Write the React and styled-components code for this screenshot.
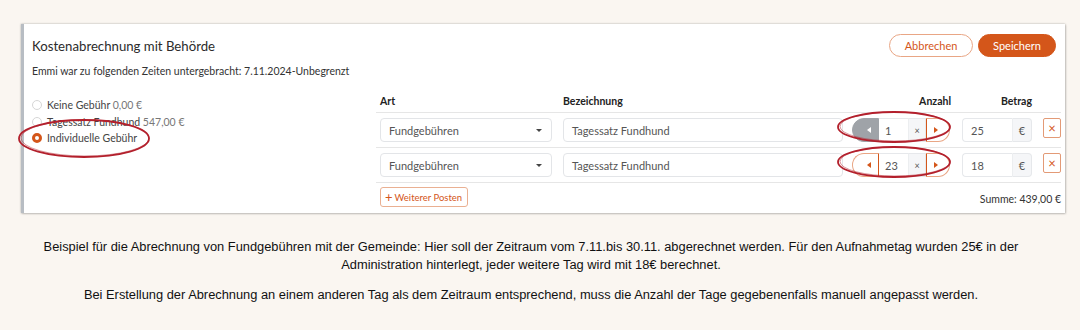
import React from 'react'
import styled, { createGlobalStyle, css } from 'styled-components'

const orange = '#d4561a'

const GlobalStyle = createGlobalStyle`
  html, body {
    margin: 0;
    padding: 0;
    background: #faf6f1;
  }
  body {
    font-family: Lato, "Open Sans", sans-serif;
  }
`

const Page = styled.div`
  width: 1080px;
  height: 330px;
  padding-top: 24px;
  box-sizing: border-box;
`

const Card = styled.div`
  position: relative;
  margin: 0 15px 0 21px;
  background: #fff;
  border-left: 3px solid #b8bdc3;
  box-shadow: 0 0 2px rgba(0, 0, 0, 0.3), 1px 1px 2px rgba(0, 0, 0, 0.15);
  padding: 10px 4px 5px 8px;
  height: 189px;
  box-sizing: border-box;
  color: #333;
`

const Header = styled.div`
  display: flex;
  align-items: center;
  justify-content: space-between;
  padding-right: 5px;
  height: 23px;
`

const Title = styled.h1`
  margin: 0;
  font-size: 13.2px;
  font-weight: 400;
  color: #2b2b2b;
`

const Actions = styled.div`
  display: flex;
  gap: 5px;
`

const PillButton = styled.button`
  height: 23px;
  border-radius: 12px;
  font-family: inherit;
  font-size: 11px;
  padding: 0;
  cursor: pointer;
  ${p => p.primary
    ? css`
      width: 78px;
      background: ${orange};
      border: 1px solid ${orange};
      color: #fff;
    `
    : css`
      width: 84px;
      background: #fff;
      border: 1px solid #e9a685;
      color: ${orange};
    `}
`

const Subtitle = styled.p`
  margin: 6px 0 0;
  font-size: 10.5px;
  line-height: 16px;
  color: #333;
`

const Body = styled.div`
  display: grid;
  grid-template-columns: 344px 1fr;
  margin-top: 11px;
`

const RadioList = styled.div`
  padding-top: 7px;
  display: flex;
  flex-direction: column;
`

const RadioRow = styled.label`
  position: relative;
  display: flex;
  align-items: center;
  gap: 5px;
  height: 16.5px;
  font-size: 10.5px;
  color: #444;
`

const RadioDot = styled.span`
  width: 10px;
  height: 10px;
  border-radius: 50%;
  box-sizing: border-box;
  ${p => p.checked
    ? css`border: 3px solid ${orange}; background: #fff;`
    : css`border: 1px solid #d6d6d6; background: #fff;`}
`

const Muted = styled.span`
  color: #777;
`

const Mark = styled.svg`
  position: absolute;
  pointer-events: none;
  overflow: visible;
`

const Table = styled.div`
  display: flex;
  flex-direction: column;
`

const Row = styled.div`
  display: grid;
  grid-template-columns: 172px 1fr 97px 70px 18px;
  column-gap: 11px;
  align-items: center;
  padding: ${p => (p.head ? '0' : '5px')} 0 5px 4px;
  height: ${p => (p.head ? '23px' : 'auto')};
  box-sizing: border-box;
  border-bottom: 1px solid #e6e6e6;
`

const HeadCell = styled.div`
  font-size: 10.5px;
  font-weight: 700;
  color: #222;
  padding-top: 5px;
  text-align: ${p => p.align || 'left'};
`

const Field = styled.div`
  display: flex;
  align-items: center;
  height: 24px;
  box-sizing: border-box;
  border: 1px solid #e3e5e8;
  border-radius: 4px;
  padding: 0 8px;
  font-size: 11px;
  color: #555;
  background: #fff;
  justify-content: space-between;
`

const Caret = styled.span`
  width: 0;
  height: 0;
  border-left: 3px solid transparent;
  border-right: 3px solid transparent;
  border-top: 3px solid #444;
  margin-right: 1px;
`

const Spinner = styled.div`
  position: relative;
  display: flex;
  height: 24px;
  margin-left: -2px;
`

const StepBtn = styled.div`
  width: ${p => (p.side === 'left' ? 27 : 24)}px;
  height: 24px;
  box-sizing: border-box;
  display: flex;
  align-items: center;
  justify-content: center;
  ${p => p.side === 'left'
    ? css`border-radius: 12px 0 0 12px; padding-left: 6px;`
    : css`border-radius: 0 12px 12px 0; padding-right: 4px;`}
  ${p => p.disabled
    ? css`background: #9fa3a8; border: 1px solid #9fa3a8; color: #fff;`
    : css`background: #fff; border: 1px solid #e9a685; color: ${orange};`}
  ${p => p.side === 'right' && css`border-left-color: ${orange};`}
  ${p => p.side === 'left' && !p.disabled && css`border-right-color: ${orange};`}
`

const Tri = styled.span`
  width: 0;
  height: 0;
  border-top: 3.5px solid transparent;
  border-bottom: 3.5px solid transparent;
  ${p => p.dir === 'left'
    ? css`border-right: 4px solid currentColor;`
    : css`border-left: 4px solid currentColor;`}
`

const NumInput = styled.div`
  width: 29px;
  height: 24px;
  box-sizing: border-box;
  border-top: 1px solid #e6e8eb;
  border-bottom: 1px solid #e6e8eb;
  display: flex;
  align-items: center;
  padding-left: 6px;
  font-size: 11px;
  color: #555;
`

const Addon = styled.div`
  width: ${p => p.w}px;
  height: 24px;
  box-sizing: border-box;
  background: #f5f6f8;
  border: 1px solid #e6e8eb;
  border-left: 1px solid #eceef0;
  display: flex;
  align-items: center;
  justify-content: center;
  font-size: ${p => p.fs || 11}px;
  color: #555;
  ${p => p.round && css`border-radius: 0 4px 4px 0;`}
`

const Money = styled.div`
  display: flex;
  height: 24px;
`

const MoneyInput = styled.div`
  flex: 1;
  height: 24px;
  box-sizing: border-box;
  border: 1px solid #e6e8eb;
  border-right: none;
  border-radius: 4px 0 0 4px;
  display: flex;
  align-items: center;
  padding-left: 8px;
  font-size: 11px;
  color: #555;
`

const DeleteBtn = styled.div`
  width: 18px;
  height: 20px;
  box-sizing: border-box;
  border: 1px solid #e39a76;
  border-radius: 2px;
  color: ${orange};
  display: flex;
  align-items: center;
  justify-content: center;
  font-size: 13px;
  line-height: 1;
  margin-top: -4px;
`

const Footer = styled.div`
  display: flex;
  align-items: center;
  justify-content: space-between;
  padding: 4px 0 0 4px;
`

const AddBtn = styled.button`
  height: 20px;
  padding: 0 5px 0 4px;
  border: 1px solid #eab092;
  border-radius: 3px;
  background: #fff;
  color: ${orange};
  font-family: inherit;
  font-size: 9.5px;
  display: flex;
  align-items: center;
  gap: 2px;
  span {
    font-size: 13px;
    line-height: 1;
  }
`

const Sum = styled.div`
  font-size: 10.5px;
  color: #333;
  padding-top: 3px;
`

const Caption = styled.div`
  width: 1000px;
  margin: 25px 0 0 31px;
  text-align: center;
  font-family: "Liberation Sans", Arial, sans-serif;
  font-size: 12.85px;
  line-height: 18px;
  color: #111;
  p {
    margin: 0 0 12px;
  }
`

const Ellipse = ({ style, w, h }) => (
  <Mark style={style} width={w} height={h} viewBox={`0 0 ${w} ${h}`}>
    <ellipse cx={w / 2} cy={h / 2} rx={w / 2 - 1} ry={h / 2 - 1}
      fill="none" stroke="#b3202c" strokeWidth="1.8" />
    <ellipse cx={w / 2 + 1} cy={h / 2 - 0.5} rx={w / 2 - 2} ry={h / 2 - 1.5}
      fill="none" stroke="#b3202c" strokeWidth="0.8" opacity="0.6" />
  </Mark>
)

const rows = [
  { count: '1', price: '25', first: true },
  { count: '23', price: '18' }
]

export default function App () {
  return (
    <Page>
      <GlobalStyle />
      <Card>
        <Header>
          <Title>Kostenabrechnung mit Behörde</Title>
          <Actions>
            <PillButton>Abbrechen</PillButton>
            <PillButton primary>Speichern</PillButton>
          </Actions>
        </Header>
        <Subtitle>Emmi war zu folgenden Zeiten untergebracht: 7.11.2024-Unbegrenzt</Subtitle>
        <Body>
          <RadioList>
            <RadioRow><RadioDot /><span>Keine Gebühr <Muted>0,00 €</Muted></span></RadioRow>
            <RadioRow><RadioDot /><span>Tagessatz Fundhund <Muted>547,00 €</Muted></span></RadioRow>
            <RadioRow>
              <RadioDot checked /><span>Individuelle Gebühr</span>
              <Ellipse w={132} h={39} style={{ left: -14, top: -11 }} />
            </RadioRow>
          </RadioList>
          <Table>
            <Row head>
              <HeadCell>Art</HeadCell>
              <HeadCell>Bezeichnung</HeadCell>
              <HeadCell align='right'>Anzahl</HeadCell>
              <HeadCell align='right'>Betrag</HeadCell>
              <div />
            </Row>
            {rows.map(r => (
              <Row key={r.count}>
                <Field>Fundgebühren<Caret /></Field>
                <Field>Tagessatz Fundhund</Field>
                <Spinner>
                  <StepBtn side='left' disabled={r.first}><Tri dir='left' /></StepBtn>
                  <NumInput>{r.count}</NumInput>
                  <Addon w={18} fs={9}>×</Addon>
                  <StepBtn side='right'><Tri dir='right' /></StepBtn>
                  <Ellipse w={114} h={32} style={{ left: -15, top: -7 }} />
                </Spinner>
                <Money>
                  <MoneyInput>{r.price}</MoneyInput>
                  <Addon w={20} round>€</Addon>
                </Money>
                <DeleteBtn>×</DeleteBtn>
              </Row>
            ))}
            <Footer>
              <AddBtn><span>+</span>Weiterer Posten</AddBtn>
              <Sum>Summe: 439,00 €</Sum>
            </Footer>
          </Table>
        </Body>
      </Card>
      <Caption>
        <p>Beispiel für die Abrechnung von Fundgebühren mit der Gemeinde: Hier soll der Zeitraum vom 7.11.bis 30.11. abgerechnet werden. Für den Aufnahmetag wurden 25€ in der Administration hinterlegt, jeder weitere Tag wird mit 18€ berechnet.</p>
        <p>Bei Erstellung der Abrechnung an einem anderen Tag als dem Zeitraum entsprechend, muss die Anzahl der Tage gegebenenfalls manuell angepasst werden.</p>
      </Caption>
    </Page>
  )
}
